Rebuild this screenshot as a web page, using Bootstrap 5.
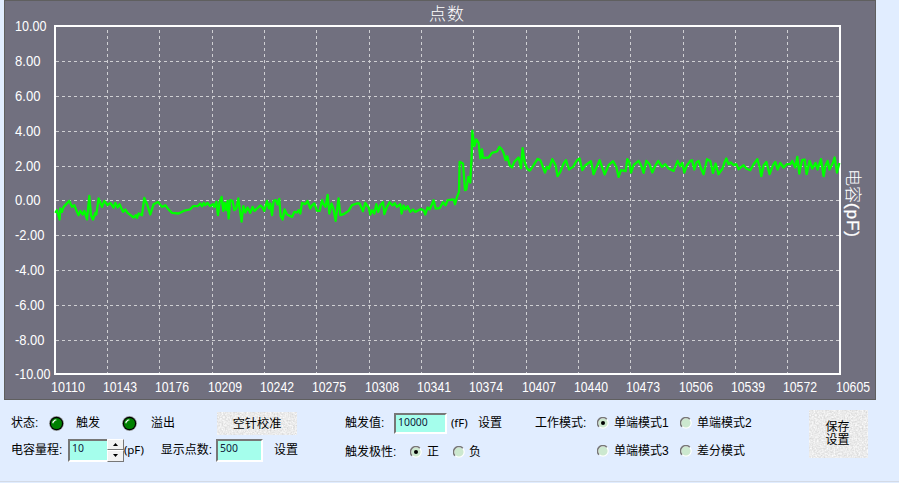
<!DOCTYPE html>
<html lang="zh-CN">
<head>
<meta charset="utf-8">
<title>电容监测</title>
<link href="https://cdn.jsdelivr.net/npm/bootstrap@5.3.0/dist/css/bootstrap.min.css" rel="stylesheet">
<style>
body{background:#e1edff;font-family:"Liberation Sans","Noto Sans CJK SC",sans-serif;font-size:12px;line-height:14px;color:#000;width:899px;height:483px;overflow:hidden}
.app-window{height:482px;border-bottom:1px solid #d3dae6}
.plot-panel{width:872px;height:400px;margin-left:4px;background:#71707f;border:1px solid #5f5f5f}
.plot-panel svg{margin:-1px}
.axis-text{font:14px "Liberation Sans",sans-serif;fill:#fff}
.head-text{font:300 17px "Noto Sans CJK SC",sans-serif;fill:#fff}
.panel-row{display:grid;align-items:center;white-space:nowrap;height:24px}
.left-pane{width:334px;padding:11px 0 0 11px}
.mid-pane{width:190px;padding:11px 0 0 11px}
.mode-pane{width:274px;padding:11px 0 0 11px}
.status-row{grid-template-columns:38px 27px 46px 29px 66px 81px}
.range-row{grid-template-columns:57px 56px 92px 58px 40px;margin-top:3px}
.trigger-row{grid-template-columns:49px 57px 27px 30px}
.polarity-row{grid-template-columns:65px 17px 26px 16px 20px;margin-top:5px}
.mode-row{grid-template-columns:62px 17px 66px 17px 70px}
.mode-row + .mode-row{margin-top:4px}
.field{border:2px solid;border-color:#777 #fff #fff #777;background:#a5feec;border-radius:0;padding:0 0 0 2px;font:10.4px/15px "Noto Sans","Liberation Sans",sans-serif;color:#10203a}
.latin{font:11.5px/14px "Noto Sans",sans-serif;letter-spacing:-.1px}
.f-range{width:39px;height:23px;border-right:0}
.f-points{width:47px;height:23px}
.f-trigger{width:53px;height:21px}
.step-btn{width:17px;height:11.5px;padding:0;background:#f2f2f2;border:1px solid;border-color:#fff #777 #777 #fff;border-radius:0;line-height:0}
.grain-btn{position:relative;padding:0;border:0;border-radius:0;background:#ededed;color:#000;overflow:hidden}
.grain-btn svg{position:absolute;inset:0}
.grain-btn span{position:relative}
.calibrate{width:80px;height:23px;font-size:12.2px;line-height:25px}
.save{width:59px;height:48px;margin:10px 0 0 11px;font-size:12px;line-height:13px}
.save span{left:-1px}
</style>
<script src="https://cdn.jsdelivr.net/npm/bootstrap@5.3.0/dist/js/bootstrap.bundle.min.js"></script>
</head>
<body>
<svg width="0" height="0" class="position-absolute" aria-hidden="true">
<defs>
<filter id="grain" x="0" y="0" width="100%" height="100%" color-interpolation-filters="sRGB"><feTurbulence type="fractalNoise" baseFrequency=".6" numOctaves="2" seed="4"/><feColorMatrix values=".22 0 0 0 .81  .22 0 0 0 .81  .22 0 0 0 .81  0 0 0 0 1"/></filter>
<symbol id="led" viewBox="0 0 15 15"><circle cx="7.5" cy="7.5" r="7.4" fill="#969a9c"/><circle cx="7.5" cy="7.5" r="6.7" fill="#000"/><circle cx="7.5" cy="7.5" r="5.5" fill="#008000"/><path d="M4 7.2V6L6 4H7.4" fill="none" stroke="#fff" stroke-width="1.2"/></symbol>
<symbol id="radio" viewBox="0 0 12 12"><circle cx="6" cy="6" r="5.2" fill="#cce8cf" stroke="#fff" stroke-width="1.2"/><path d="M2 9.8A5.3 5.3 0 0 1 9.8 2.2" fill="none" stroke="#777" stroke-width="1.5"/></symbol>
</defs>
</svg>
<main class="app-window">
<section class="plot-panel">
<svg id="plot" class="d-block" width="872" height="400" viewBox="4 0 872 400">
<g id="grid" stroke="#cfcfd3" stroke-dasharray="3 3" shape-rendering="crispEdges"></g>
<rect x="55" y="26" width="785" height="348" fill="none" stroke="#fff" stroke-width="2" shape-rendering="crispEdges"/>
<polyline id="trace" transform="translate(.3 .2)" fill="none" stroke="#0f0" stroke-width="2.3" stroke-linejoin="round"/>
<g id="labels" class="axis-text"></g>
<text class="head-text" x="429" y="19.5" textLength="35">点数</text>
<g transform="translate(847 169) rotate(90)"><text class="head-text" x="0" y="0" textLength="34">电容</text><text x="34" y="0" textLength="34" fill="#fff" font-size="17" font-family="Liberation Sans" stroke="#fff" stroke-width=".35">(pF)</text></g>
</svg>
</section>
<section class="d-flex align-items-start">
<div class="left-pane">
<div class="panel-row status-row"><span>状态:</span><svg width="15" height="15"><use href="#led"/></svg><span>触发</span><svg width="15" height="15"><use href="#led"/></svg><span>溢出</span>
<button class="btn grain-btn calibrate"><svg width="80" height="23"><rect width="80" height="23" filter="url(#grain)"/></svg><span>空针校准</span></button></div>
<div class="panel-row range-row"><span>电容量程:</span>
<div class="d-flex"><div class="field f-range">10</div><div class="d-flex flex-column"><button class="btn step-btn d-flex align-items-center justify-content-center"><svg width="5" height="3"><path d="M0 3 2.5 0 5 3z"/></svg></button><button class="btn step-btn d-flex align-items-center justify-content-center"><svg width="5" height="3"><path d="M0 0h5L2.5 3z"/></svg></button></div></div>
<div class="d-flex"><span class="latin">(pF)</span><span class="ms-auto pe-1">显示点数:</span></div><div class="field f-points">500</div><span>设置</span></div>
</div>
<div class="mid-pane">
<div class="panel-row trigger-row"><span>触发值:</span><div class="field f-trigger">10000</div><span class="latin">(fF)</span><span>设置</span></div>
<div class="panel-row polarity-row"><span>触发极性:</span><svg width="12" height="12"><use href="#radio"/><circle cx="6" cy="6" r="2"/></svg><span>正</span><svg width="12" height="12"><use href="#radio"/></svg><span>负</span></div>
</div>
<div class="mode-pane">
<div class="panel-row mode-row"><span>工作模式:</span><svg width="12" height="12"><use href="#radio"/><circle cx="6" cy="6" r="2"/></svg><span>单端模式1</span><svg width="12" height="12"><use href="#radio"/></svg><span>单端模式2</span></div>
<div class="panel-row mode-row"><span></span><svg width="12" height="12"><use href="#radio"/></svg><span>单端模式3</span><svg width="12" height="12"><use href="#radio"/></svg><span>差分模式</span></div>
</div>
<button class="btn grain-btn save"><svg width="59" height="48"><rect width="59" height="48" filter="url(#grain)"/></svg><span>保存<br>设置</span></button>
</section>
</main>
<script>
const NS='http://www.w3.org/2000/svg';
function add(parent,tag,attrs,text){const e=document.createElementNS(NS,tag);for(const k in attrs)e.setAttribute(k,attrs[k]);if(text)e.textContent=text;document.getElementById(parent).appendChild(e);}
const xs=[55,107,159,212,264,316,369,421,473,526,578,630,683,735,787,840];
const ys=[26,61,96,131,166,200,235,270,305,340,374];
xs.forEach((x,i)=>{
  if(i&&i<15)add('grid','line',{x1:x+.5,x2:x+.5,y1:30,y2:374});
  add('labels','text',{x:x-4,y:392,textLength:34,lengthAdjust:'spacingAndGlyphs'},String(10110+33*i));
});
ys.forEach((y,i)=>{
  if(i&&i<10)add('grid','line',{x1:56,x2:839,y1:y+.5,y2:y+.5});
  const s=(10-2*i).toFixed(2);
  add('labels','text',{x:15,y:y+5,textLength:{4:25.5,5:s[0]=='-'?29.5:31.5,6:35.5}[s.length],lengthAdjust:'spacingAndGlyphs'},s);
});
/* Each section: origin x, origin y, then x y pairs in thirds of a unit. */
const sections=[
[0,180,'165 98 170 90 178 118 180 85 185 95 190 80 207 62 215 80 222 75 230 95 235 105 240 92 247 103 252 92 260 118 267 47 272 105 278 118 285 98 288 103 295 55 305 80 312 62 322 75 330 68 340 82 345 68 352 82 358 72 368 95 375 88 382 98 400 112 407 105 410 113 415 100 425 105 432 53 440 72 450 103 460 72 473 65 485 80 495 75 505 88 515 98 535 100 550 92 568 88'],
[190,180,'0 87 8 78 22 78 30 70 35 78 40 68 45 75 52 68 60 78 68 72 72 80 78 65 83 105 88 65 94 50 99 92 103 68 108 90 112 62 115 115 120 60 127 62 132 90 138 85 144 55 149 92 154 124 159 78 165 97 172 82 180 98 187 80 193 92 210 76 215 80 222 92 230 62 236 85 240 70 245 105 250 62 257 60 262 73 267 56 271 108 277 118 283 88 290 103 305 110 312 95 320 97 325 90 330 100 335 68 345 72 352 62 360 85 366 75 372 70 380 92 388 92 395 60 400 72 406 80 412 44 417 100 424 70 430 88 436 122 445 55 450 105 460 102 475 92 485 75 500 70 508 70'],
[360,120,'0 255 8 273 15 248 25 262 30 283 35 270 42 280 48 252 54 275 60 255 68 246 72 282 80 260 88 246 97 256 103 249 110 260 120 252 124 280 130 256 136 268 142 258 150 275 158 268 165 275 180 267 190 270 195 283 202 262 208 268 215 252 220 240 226 265 238 264 248 246 256 255 262 240 280 238 284 252 290 230 296 215 298 125 308 130 314 210 318 208 324 170 330 187 334 110 336 32 342 78 348 58 355 68 360 115 365 88 368 113 385 112 395 98 410 94 417 80 425 88 430 98 436 120 441 108 448 135 455 142 462 125 475 112 482 144 487 84 493 125 500 145 508 151'],
[530,140,'0 90 10 75 22 56 30 60 44 97 50 80 56 85 66 57 76 75 82 108 90 95 100 70 107 60 116 88 128 80 140 60 148 55 156 90 165 75 182 63 190 102 200 78 208 60 215 80 223 103 235 75 248 63 258 80 265 110 272 90 286 93 291 57 297 65 302 97 310 75 325 62 332 75 340 98 348 62 358 72 366 97 376 75 384 62 395 80 405 72 415 85 430 92 442 62 450 78 456 68 462 97 470 75 478 65'],
[690,140,'0 62 5 60 12 88 18 67 25 62 32 85 40 102 50 57 60 62 68 98 76 70 85 102 97 85 103 65 108 55 115 72 122 67 130 75 138 72 145 87 160 75 168 85 180 90 190 72 201 57 208 80 213 108 220 75 228 65 238 102 248 75 255 65 262 88 270 68 280 82 290 72 300 72 306 62 315 82 321 50 327 100 335 60 343 58 349 102 358 62 366 85 376 68 382 88 392 57 400 108 406 75 412 62 418 88 427 70 433 52 440 97 447 68']];
const pts=[];
sections.forEach(([ox,oy,d])=>{const n=d.split(' ').map(Number);for(let i=0;i<n.length;i+=2)pts.push((ox+n[i]/3).toFixed(1)+','+(oy+n[i+1]/3).toFixed(1));});
document.getElementById('trace').setAttribute('points',pts.join(' '));
</script>
</body>
</html>
